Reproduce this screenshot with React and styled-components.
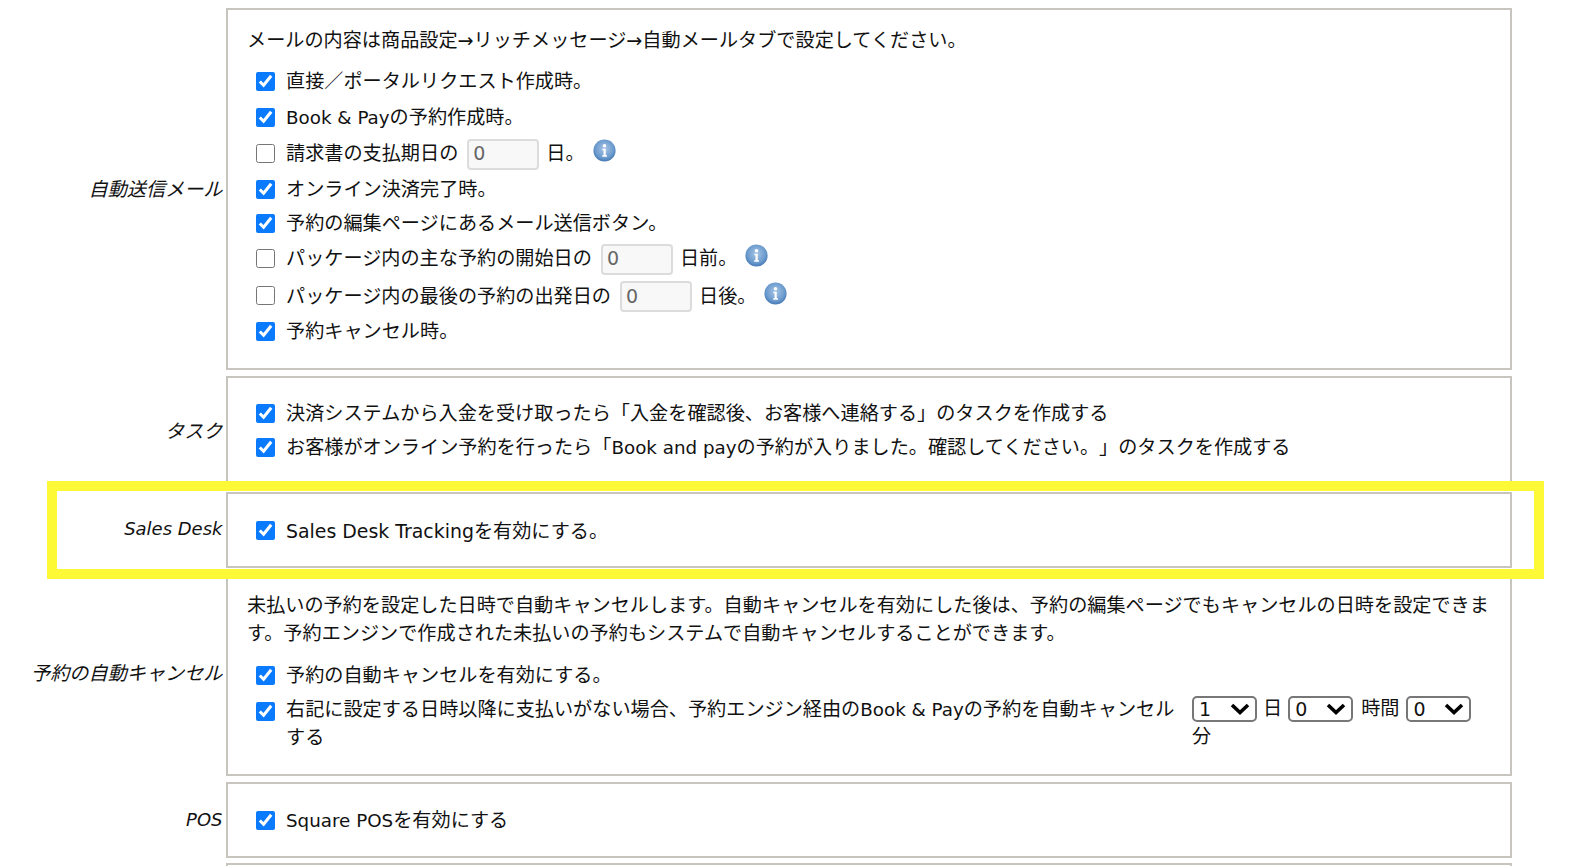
import styled, { createGlobalStyle } from "styled-components";

const GlobalStyle = createGlobalStyle`
  html, body {
    margin: 0;
    padding: 0;
    height: 866px;
    overflow: hidden;
    background: #fff;
  }
  body {
    font-family: "DejaVu Sans", "Noto Sans CJK JP", sans-serif;
    font-size: 19.15px;
    line-height: 28px;
    color: #111;
    text-spacing-trim: space-all;
  }
`;

const Form = styled.div`
  display: grid;
  grid-template-columns: 222.5px 1286px;
  column-gap: 3.5px;
  row-gap: 6px;
  padding-top: 8px;
`;

const FieldLabel = styled.div`
  align-self: center;
  margin: 2px 0 ${({ $up }) => $up || 0}px;
  text-align: right;
  font-style: italic;
  white-space: nowrap;
`;

const Latin = styled.span`
  font-size: ${({ $size }) => $size || 18.3}px;
`;

const FieldBox = styled.div`
  border: 2px solid #c8c5be;
  padding: ${({ $pad }) => $pad || "19px"} 19px ${({ $padBottom }) => $padBottom || "19px"};
  box-sizing: border-box;
`;

const SalesBox = styled(FieldBox)`
  position: relative;
`;

const Highlight = styled.div`
  position: absolute;
  top: -13px;
  bottom: -13px;
  left: -181px;
  width: 1497px;
  box-sizing: border-box;
  border: 10px solid #fdf936;
  pointer-events: none;
`;

const NextBox = styled(FieldBox)`
  margin-top: -1px;
  height: 60px;
`;

const Intro = styled.p`
  margin: 0 0 ${({ $gap }) => $gap || "8px"};
`;

const Row = styled.div`
  display: flex;
  align-items: center;
  margin-left: 9px;
  height: ${({ $h }) => $h || 34}px;
  white-space: nowrap;
`;

const TopRow = styled.div`
  display: flex;
  align-items: flex-start;
  margin-left: 9px;
  padding-top: 3px;
`;

const Line = styled.span`
  padding-top: 2px;
`;

const Check = styled.input.attrs({ type: "checkbox" })`
  width: 19px;
  height: 19px;
  margin: ${({ $top }) => $top || 0}px 11px 0 0;
  flex: none;
  accent-color: #0a7aff;
`;

const NumberInput = styled.input.attrs({ type: "text" })`
  width: 72px;
  height: 31px;
  box-sizing: border-box;
  margin: 2px 7px 0 9px;
  padding: 0 4px 2px;
  border: 2px solid #dcdcdc;
  border-radius: 4px;
  background: #f8f8f8;
  color: #666;
  font: inherit;
  font-size: 19px;
`;

const WrapLabel = styled.span`
  width: 906px;
  flex: none;
  padding: 1px 8px 0 0;
  box-sizing: border-box;
`;

const Timing = styled.div`
  display: flex;
  flex-wrap: wrap;
  align-items: center;
  column-gap: 6px;
  width: 300px;
`;

const Unit = styled.span`
  margin: 0 ${({ $right }) => $right || 0}px 0 ${({ $left }) => $left || 0}px;
`;

const Select = styled.select`
  appearance: none;
  width: 65px;
  height: 26px;
  box-sizing: border-box;
  padding: 0 0 0 5px;
  border: 2px solid #777;
  border-radius: 5px;
  color: #111;
  font-family: "DejaVu Sans", sans-serif;
  font-size: 19px;
  line-height: 22px;
  background: #fff url("data:image/svg+xml,%3Csvg xmlns='http://www.w3.org/2000/svg' viewBox='0 0 20 12'%3E%3Cpath d='M2 2l8 7.5 8-7.5' fill='none' stroke='%23000' stroke-width='3.6'/%3E%3C/svg%3E") no-repeat right 5px center / 20px 12px;
`;

const InfoSvg = styled.svg`
  width: 23px;
  height: 23px;
  margin: 0 0 5px 8px;
  flex: none;
`;

const InfoIcon = () => (
  <InfoSvg viewBox="0 0 22 22">
    <defs>
      <radialGradient id="info" cx="50%" cy="42%" r="60%">
        <stop offset="0%" stopColor="#a9c6e6" />
        <stop offset="70%" stopColor="#6a9acd" />
        <stop offset="100%" stopColor="#3f74b0" />
      </radialGradient>
    </defs>
    <circle cx="11" cy="11" r="10.6" fill="url(#info)" />
    <circle cx="11" cy="6.4" r="1.7" fill="#fff" />
    <path d="M9 9.4h3.2v6.2h1.2v1.4H8.8v-1.4h1.3v-4.8H9z" fill="#fff" />
  </InfoSvg>
);

const CheckRow = ({ h, children, checked = true }) => (
  <Row $h={h}>
    <Check defaultChecked={checked} />
    <Line>{children}</Line>
  </Row>
);

const App = () => (
  <>
    <GlobalStyle />
    <Form>
      <FieldLabel>自動送信メール</FieldLabel>
      <FieldBox $pad="17px" $padBottom="20px">
        <Intro>メールの内容は商品設定→リッチメッセージ→自動メールタブで設定してください。</Intro>
        <CheckRow h={36}>直接／ポータルリクエスト作成時。</CheckRow>
        <CheckRow h={36}><Latin>Book &amp; Pay</Latin>の予約作成時。</CheckRow>
        <Row $h={36}>
          <Check />
          <Line>請求書の支払期日の</Line>
          <NumberInput defaultValue="0" />
          <Line>日。</Line>
          <InfoIcon />
        </Row>
        <CheckRow h={36}>オンライン決済完了時。</CheckRow>
        <CheckRow h={32}>予約の編集ページにあるメール送信ボタン。</CheckRow>
        <Row $h={38}>
          <Check />
          <Line>パッケージ内の主な予約の開始日の</Line>
          <NumberInput defaultValue="0" />
          <Line>日前。</Line>
          <InfoIcon />
        </Row>
        <Row $h={37}>
          <Check />
          <Line>パッケージ内の最後の予約の出発日の</Line>
          <NumberInput defaultValue="0" />
          <Line>日後。</Line>
          <InfoIcon />
        </Row>
        <CheckRow h={34}>予約キャンセル時。</CheckRow>
      </FieldBox>

      <FieldLabel>タスク</FieldLabel>
      <FieldBox $pad="18px" $padBottom="20px">
        <CheckRow>決済システムから入金を受け取ったら「入金を確認後、お客様へ連絡する」のタスクを作成する</CheckRow>
        <CheckRow>お客様がオンライン予約を行ったら「<Latin>Book and pay</Latin>の予約が入りました。確認してください。」のタスクを作成する</CheckRow>
      </FieldBox>

      <FieldLabel $up={4}><Latin $size={18}>Sales Desk</Latin></FieldLabel>
      <SalesBox>
        <CheckRow><Latin $size={18.9}>Sales Desk Tracking</Latin>を有効にする。</CheckRow>
        <Highlight />
      </SalesBox>

      <FieldLabel $up={4}>予約の自動キャンセル</FieldLabel>
      <FieldBox $pad="16px" $padBottom="22px">
        <Intro $gap="10px">
          未払いの予約を設定した日時で自動キャンセルします。自動キャンセルを有効にした後は、予約の編集ページでもキャンセルの日時を設定できます。予約エンジンで作成された未払いの予約もシステムで自動キャンセルすることができます。
        </Intro>
        <CheckRow>予約の自動キャンセルを有効にする。</CheckRow>
        <TopRow>
          <Check $top={7} defaultChecked />
          <WrapLabel>右記に設定する日時以降に支払いがない場合、予約エンジン経由の<Latin>Book &amp; Pay</Latin>の予約を自動キャンセルする</WrapLabel>
          <Timing>
            <Select defaultValue="1">
              <option>1</option>
            </Select>
            <Unit>日</Unit>
            <Select defaultValue="0">
              <option>0</option>
            </Select>
            <Unit $left={2} $right={1}>時間</Unit>
            <Select defaultValue="0">
              <option>0</option>
            </Select>
            <Unit>分</Unit>
          </Timing>
        </TopRow>
      </FieldBox>

      <FieldLabel $up={2}><Latin $size={18}>POS</Latin></FieldLabel>
      <FieldBox>
        <CheckRow><Latin>Square POS</Latin>を有効にする</CheckRow>
      </FieldBox>

      <div />
      <NextBox />
    </Form>
  </>
);

export default App;
